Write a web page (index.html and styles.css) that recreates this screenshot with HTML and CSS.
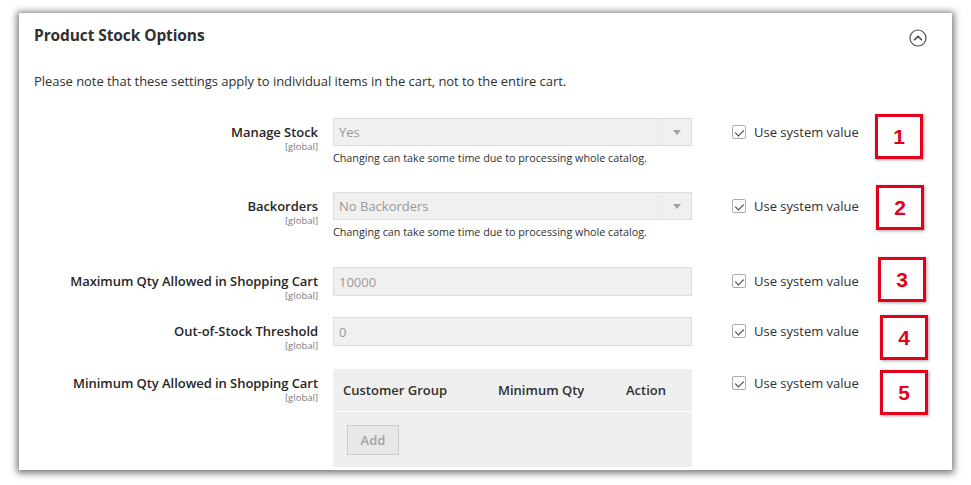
FILE: index.html
```html
<!DOCTYPE html>
<html>
<head>
<meta charset="utf-8">
<link rel="stylesheet" href="styles.css">
</head>
<body>
<div class="stage">
  <section class="panel">
    <header class="panel-head">
      <h2 class="title">Product Stock Options</h2>
      <svg class="collapse" width="18" height="18" viewBox="0 0 18 18">
        <circle cx="9" cy="9" r="8" fill="none" stroke="#514943" stroke-width="1.2"/>
        <path d="M5.6 10.6 L9 7.2 L12.4 10.6" fill="none" stroke="#514943" stroke-width="1.6" stroke-linecap="round" stroke-linejoin="round"/>
      </svg>
    </header>
    <p class="notice">Please note that these settings apply to individual items in the cart, not to the entire cart.</p>

    <div class="row row-a">
      <div class="label"><span class="name">Manage Stock</span><span class="scope">[global]</span></div>
      <div class="control">
        <div class="field select"><span>Yes</span><span class="arrow"></span></div>
        <div class="note">Changing can take some time due to processing whole catalog.</div>
      </div>
      <label class="use"><span class="check"></span>Use system value</label>
    </div>

    <div class="row row-b">
      <div class="label"><span class="name">Backorders</span><span class="scope">[global]</span></div>
      <div class="control">
        <div class="field select"><span>No Backorders</span><span class="arrow"></span></div>
        <div class="note">Changing can take some time due to processing whole catalog.</div>
      </div>
      <label class="use"><span class="check"></span>Use system value</label>
    </div>

    <div class="row row-c">
      <div class="label"><span class="name">Maximum Qty Allowed in Shopping Cart</span><span class="scope">[global]</span></div>
      <div class="control">
        <div class="field input"><span>10000</span></div>
      </div>
      <label class="use"><span class="check"></span>Use system value</label>
    </div>

    <div class="row row-d">
      <div class="label"><span class="name">Out-of-Stock Threshold</span><span class="scope">[global]</span></div>
      <div class="control">
        <div class="field input"><span>0</span></div>
      </div>
      <label class="use"><span class="check"></span>Use system value</label>
    </div>

    <div class="row row-e">
      <div class="label"><span class="name">Minimum Qty Allowed in Shopping Cart</span><span class="scope">[global]</span></div>
      <div class="control">
        <div class="grid-table">
          <div class="thead">
            <span class="th th-group">Customer Group</span>
            <span class="th th-qty">Minimum Qty</span>
            <span class="th th-action">Action</span>
          </div>
          <div class="tfoot"><span class="add">Add</span></div>
        </div>
      </div>
      <label class="use"><span class="check"></span>Use system value</label>
    </div>

    <span class="marker m1">1</span>
    <span class="marker m2">2</span>
    <span class="marker m3">3</span>
    <span class="marker m4">4</span>
    <span class="marker m5">5</span>
  </section>
</div>
</body>
</html>
```

FILE: styles.css
```css
* { box-sizing: border-box; }
html, body { margin: 0; padding: 0; background: #ffffff; }
body { font-family: "Open Sans", "Noto Sans", sans-serif; color: #303030; }

.stage { width: 971px; height: 485px; padding: 13px 19px 0 19px; overflow: hidden; }

.panel {
  position: relative;
  width: 933px;
  height: 457px;
  background: #ffffff;
  box-shadow: 0 1px 7px 2px rgba(0,0,0,0.55);
  padding: 12px 0 0 15px;
  overflow: hidden;
}

.panel-head { display: flex; align-items: center; justify-content: space-between; padding-right: 25px; height: 20px; }
.title { margin: 0; font-size: 15.5px; font-weight: 700; line-height: 20px; color: #303030; letter-spacing: -0.1px; }
.collapse { display: block; margin-top: 6px; }

.notice { margin: 27px 0 28px 0; font-size: 13px; line-height: 18px; color: #303030; letter-spacing: -0.05px; }

.row { display: grid; grid-template-columns: 284px 359px auto; column-gap: 15px; align-items: start; }
.row-a { height: 74px; }
.row-b { height: 75px; }
.row-c { height: 50px; }
.row-d { height: 52px; }
.row-e { height: 100px; }

.label { display: flex; flex-direction: column; align-items: flex-end; text-align: right; }
.name { font-size: 13px; font-weight: 600; line-height: 28px; color: #262626; letter-spacing: -0.05px; }
.scope { font-size: 9.5px; line-height: 10px; color: #7a7a7a; margin-top: -4px; }

.field {
  height: 28px;
  background: #f0f0f0;
  border: 1px solid #dcdcdc;
  display: flex;
  align-items: center;
  padding-left: 5px;
  font-size: 13px;
  color: #999999;
}
.select { justify-content: space-between; }
.arrow {
  width: 30px; height: 26px; display: flex; align-items: center; justify-content: center;
  border-left: 1px solid #e9e9e9;
}
.arrow::before {
  content: ""; width: 0; height: 0;
  border-left: 4px solid transparent; border-right: 4px solid transparent; border-top: 5px solid #a3a3a3;
}
.input { height: 29px; }

.note { font-size: 10.75px; line-height: 14px; margin-top: 5px; color: #303030; }

.use { display: flex; align-items: center; height: 28px; margin-left: 25px; font-size: 13px; color: #303030; }
.check {
  width: 14px; height: 14px; border: 1px solid #adadad; border-radius: 2px; background: #fff;
  margin-right: 8px; position: relative;
}
.check::after {
  content: ""; position: absolute; left: 3.5px; top: 1.5px; width: 4px; height: 7px;
  border-right: 1.6px solid #303030; border-bottom: 1.6px solid #303030; transform: rotate(45deg);
}

.grid-table { background: #efefef; height: 98px; }
.thead { display: flex; height: 43px; align-items: center; border-bottom: 1px solid #ffffff; padding-left: 10px; }
.th { font-size: 13px; font-weight: 600; color: #303030; }
.th-group { width: 155px; }
.th-qty { width: 128px; }
.tfoot { padding: 13px 0 0 14px; }
.add {
  display: inline-flex; width: 52px; height: 30px; align-items: center; justify-content: center;
  background: #e8e8e8; border: 1px solid #cccccc; font-size: 13px; font-weight: 600; color: #a3a3a3;
}

.marker {
  position: absolute; width: 48px; height: 45px;
  border: 3px solid #e3001b; background: #fff;
  display: flex; align-items: center; justify-content: center;
  font-family: "Liberation Sans", Arial, sans-serif; font-weight: 700; font-size: 21px; color: #e3001b;
  box-shadow: 1px 1px 3px rgba(0,0,0,0.35);
}
.m1 { left: 856px; top: 101px; }
.m2 { left: 857px; top: 172px; }
.m3 { left: 859px; top: 244px; }
.m4 { left: 861px; top: 302px; }
.m5 { left: 861px; top: 357px; }
```
